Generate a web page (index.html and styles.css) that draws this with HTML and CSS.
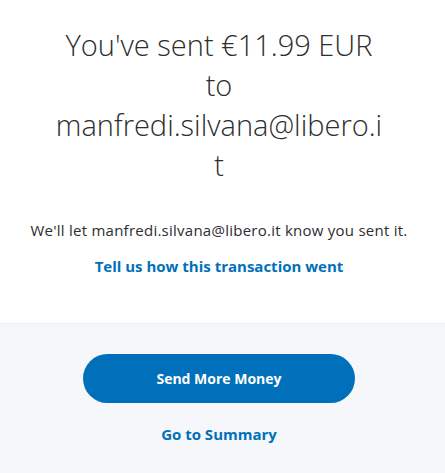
FILE: index.html
```html
<!DOCTYPE html>
<html lang="en">
<head>
<meta charset="utf-8">
<link rel="stylesheet" href="styles.css">
</head>
<body>
<main class="page">
  <section class="top">
    <h1 class="title">You've sent €11.99 EUR to manfredi.silvana@libero.it</h1>
    <p class="note">We'll let manfredi.silvana@libero.it know you sent it.</p>
    <a class="link" href="#">Tell us how this transaction went</a>
  </section>
  <section class="bottom">
    <button class="btn" type="button">Send More Money</button>
    <a class="link summary" href="#">Go to Summary</a>
  </section>
</main>
</body>
</html>
```
FILE: styles.css
```css
html, body {
  margin: 0;
  padding: 0;
  background: #fff;
}
body {
  font-family: "Open Sans", "Liberation Sans", sans-serif;
  color: #2c2e2f;
}
.page {
  display: flex;
  flex-direction: column;
  min-height: 473px;
}
.top {
  display: flex;
  flex-direction: column;
  align-items: center;
  padding: 25px 23px 47px 16px;
  text-align: center;
}
.title {
  margin: 0;
  width: 329px;
  font-size: 29px;
  font-weight: 300;
  line-height: 40px;
  overflow-wrap: break-word;
  color: #2c2e2f;
}
.note {
  margin: 35px 0 0;
  font-size: 15px;
  letter-spacing: 0.25px;
  line-height: 20px;
}
.link {
  display: block;
  margin-top: 16px;
  font-size: 15px;
  font-weight: 700;
  line-height: 20px;
  color: #0070ba;
  text-decoration: none;
}
.bottom {
  flex: 1;
  display: flex;
  flex-direction: column;
  align-items: center;
  background: #f5f7fa;
  border-top: 1px solid #eaedf0;
  padding: 30px 23px 0 16px;
}
.btn {
  width: 272px;
  height: 49px;
  border: 0;
  border-radius: 25px;
  background: #0070ba;
  color: #fff;
  font-family: inherit;
  font-size: 14px;
  font-weight: 700;
}
.summary {
  margin-top: 21px;
}
```
